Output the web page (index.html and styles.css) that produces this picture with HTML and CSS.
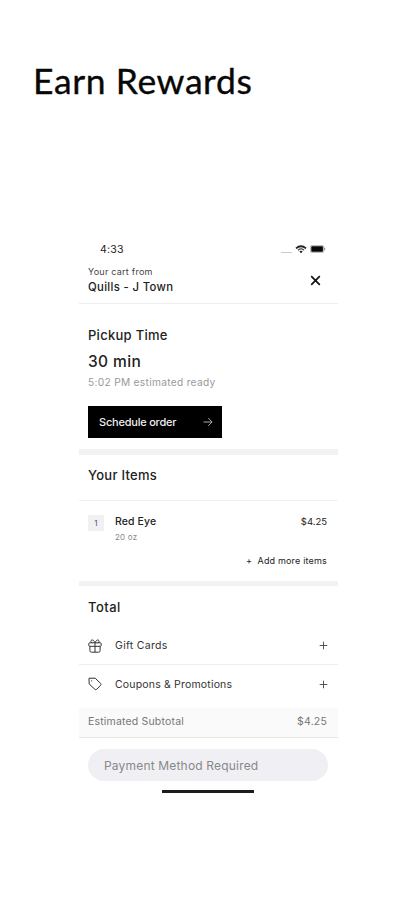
FILE: index.html
```html
<!DOCTYPE html>
<html lang="en">
<head>
<meta charset="utf-8">
<title>Earn Rewards</title>
<link rel="stylesheet" href="styles.css">
</head>
<body>
<h1 class="headline">Earn Rewards</h1>
<main class="phone">
  <div class="status">
    <span class="time">4:33</span>
    <div class="signals">
      <i class="cell"></i>
      <svg width="12" height="9" viewBox="0 0 12 9"><path d="M1 3.4Q6-.9 11 3.4" fill="none" stroke="#222" stroke-width="1.7"/><path d="M3 5.2Q6 2.7 9 5.2" fill="none" stroke="#444" stroke-width="1.3"/><path d="M4.3 6.4Q6 5.2 7.7 6.4L6 8.3Z" fill="#222"/></svg>
      <svg width="16" height="8" viewBox="0 0 16 8"><rect x=".4" y=".4" width="13.4" height="7.2" rx="1.8" fill="#ddd" stroke="#aaa" stroke-width=".8"/><rect x="1.3" y="1.3" width="11.6" height="5.4" rx=".8" fill="#080808"/><path d="M14.7 2.8v2.4" stroke="#888"/></svg>
    </div>
  </div>
  <header class="cart">
    <div>
      <p class="from">Your cart from</p>
      <p class="store">Quills - J Town</p>
    </div>
    <svg class="close" width="11" height="11" viewBox="0 0 11 11"><path d="M1.2 1.2l8.6 8.6M9.8 1.2L1.2 9.8" stroke="#111" stroke-width="1.7"/></svg>
  </header>
  <section class="pickup">
    <h2>Pickup Time</h2>
    <p class="duration">30 min</p>
    <p class="ready">5:02 PM estimated ready</p>
    <div class="schedule">
      <span>Schedule order</span>
      <svg width="10" height="10" viewBox="0 0 10 10"><path d="M.5 5h8.6M5.3 1.2L9.1 5 5.3 8.8" fill="none" stroke="#bbb" stroke-width=".9"/></svg>
    </div>
  </section>
  <section class="items">
    <h2>Your Items</h2>
    <div class="item">
      <span class="qty">1</span>
      <div class="desc"><p class="name">Red Eye</p><p class="size">20 oz</p></div>
      <span class="price">$4.25</span>
    </div>
    <p class="more">+&nbsp; Add more items</p>
  </section>
  <section class="total">
    <h2>Total</h2>
    <div class="row gift">
      <svg width="14" height="14" viewBox="0 0 14 14" fill="none" stroke="#333" stroke-width="1"><rect x=".8" y="3.8" width="12.4" height="3.5" rx=".8"/><path d="M1.9 7.4v4.2q0 1.6 1.6 1.6h7q1.6 0 1.6-1.6V7.4M7 3.8v9.4M7 3.8C5.9 1.5 5 .7 3.8 1 2.4 1.4 2.7 3.8 4.2 3.8M7 3.8C8.1 1.5 9 .7 10.2 1c1.4.4 1.1 2.8-.4 2.8"/></svg>
      <span class="label">Gift Cards</span>
      <svg width="9" height="9" viewBox="0 0 9 9"><path d="M.7 4.5h7.6M4.5.7v7.6" stroke="#444" stroke-width=".9"/></svg>
    </div>
    <div class="row coupon">
      <svg width="14" height="14" viewBox="0 0 14 14" fill="none" stroke="#333" stroke-width="1"><path d="M1 1.2h6.2l5.4 5.3q.9.9 0 1.8l-3.9 4q-.9.8-1.8 0L1.2 7Z" stroke-linejoin="round"/><circle cx="3.7" cy="3.8" r=".6" fill="#333" stroke="none"/></svg>
      <span class="label">Coupons &amp; Promotions</span>
      <svg width="9" height="9" viewBox="0 0 9 9"><path d="M.7 4.5h7.6M4.5.7v7.6" stroke="#444" stroke-width=".9"/></svg>
    </div>
    <div class="subtotal"><span>Estimated Subtotal</span><span>$4.25</span></div>
  </section>
  <div class="pay">Payment Method Required</div>
  <div class="home"></div>
</main>
</body>
</html>
```
FILE: styles.css
```css
* { box-sizing: border-box; margin: 0; padding: 0; }
body { background: #fff; color: #222; font-family: Inter, "Liberation Sans", sans-serif; overflow: hidden; }
svg { display: block; flex: none; }
.headline { height: 240px; padding: 56px 0 0 33px; font: 400 35.5px/50px Lato, sans-serif; color: #080808; letter-spacing: .6px; -webkit-text-stroke: .35px #080808; white-space: nowrap; }
.phone { width: 259px; margin-left: 79px; white-space: nowrap; }
.status { height: 20px; padding: 0 12px 2px 21px; display: flex; justify-content: space-between; align-items: center; }
.time { font-size: 10.5px; letter-spacing: .2px; }
.signals { display: flex; align-items: center; gap: 3px; }
.cell { width: 11px; height: 1px; margin-top: 6px; background: #ccc; }
.cart { height: 44px; padding: 4px 17px 0 9px; display: flex; justify-content: space-between; border-bottom: 1px solid #eee; }
.from { font-size: 9px; line-height: 16px; color: #444; letter-spacing: .25px; }
.store { font-size: 11.3px; line-height: 15px; font-weight: 500; letter-spacing: .35px; }
.close { margin-top: 11px; }
.pickup { height: 145px; padding: 21px 9px 0; }
h2 { font-size: 13px; line-height: 20px; font-weight: 500; letter-spacing: .28px; }
.duration { margin-top: 4px; font-size: 15.5px; line-height: 25px; font-weight: 500; letter-spacing: .4px; }
.ready { font-size: 10.2px; line-height: 16px; color: #999; letter-spacing: .3px; }
.schedule { width: 134px; height: 32px; margin-top: 16px; padding: 0 9px 0 11px; display: flex; align-items: center; justify-content: space-between; background: #000; color: #eee; font-size: 11px; font-weight: 500; letter-spacing: -.22px; }
.items { height: 132px; border-top: 6px solid #f2f2f5; }
.items h2 { height: 46px; padding: 10px 9px 0; border-bottom: 1px solid #f0f0f0; }
.item { height: 50px; padding: 14px 11px 0 9px; display: flex; }
.qty { width: 16px; height: 16px; background: #f1f1f4; font-size: 8px; line-height: 17px; text-align: center; color: #555; }
.desc { flex: 1; margin-left: 11px; }
.name { font-size: 10.5px; line-height: 14px; font-weight: 500; letter-spacing: .1px; }
.size { margin-top: 1px; font-size: 8px; line-height: 14px; color: #888; letter-spacing: .2px; }
.price { font-size: 9.5px; line-height: 14px; }
.more { padding-right: 11px; text-align: right; font-size: 9px; line-height: 20px; letter-spacing: .18px; }
.total { border-top: 5px solid #f2f2f5; }
.total h2 { height: 41px; padding: 11px 9px 0; letter-spacing: .45px; }
.row { display: flex; align-items: center; padding: 0 10px 0 9px; }
.gift { height: 38px; border-bottom: 1px solid #eee; }
.coupon { height: 43px; padding-bottom: 5px; }
.label { flex: 1; margin-left: 13px; font-size: 10.5px; color: #333; letter-spacing: .18px; }
.gift .label { letter-spacing: .3px; }
.subtotal { height: 30px; padding: 0 11px 3px 9px; display: flex; align-items: center; justify-content: space-between; background: #fafafa; border-bottom: 1px solid #e8e8e8; font-size: 10.5px; letter-spacing: .18px; color: #777; }
.pay { height: 32px; margin: 11px 10px 0 9px; padding-left: 16px; border-radius: 16px; background: #f0f0f4; color: #888; font-size: 12px; line-height: 33px; letter-spacing: .18px; }
.home { width: 92px; height: 3px; margin: 9px 0 0 83px; background: #1c1c1e; }
```
